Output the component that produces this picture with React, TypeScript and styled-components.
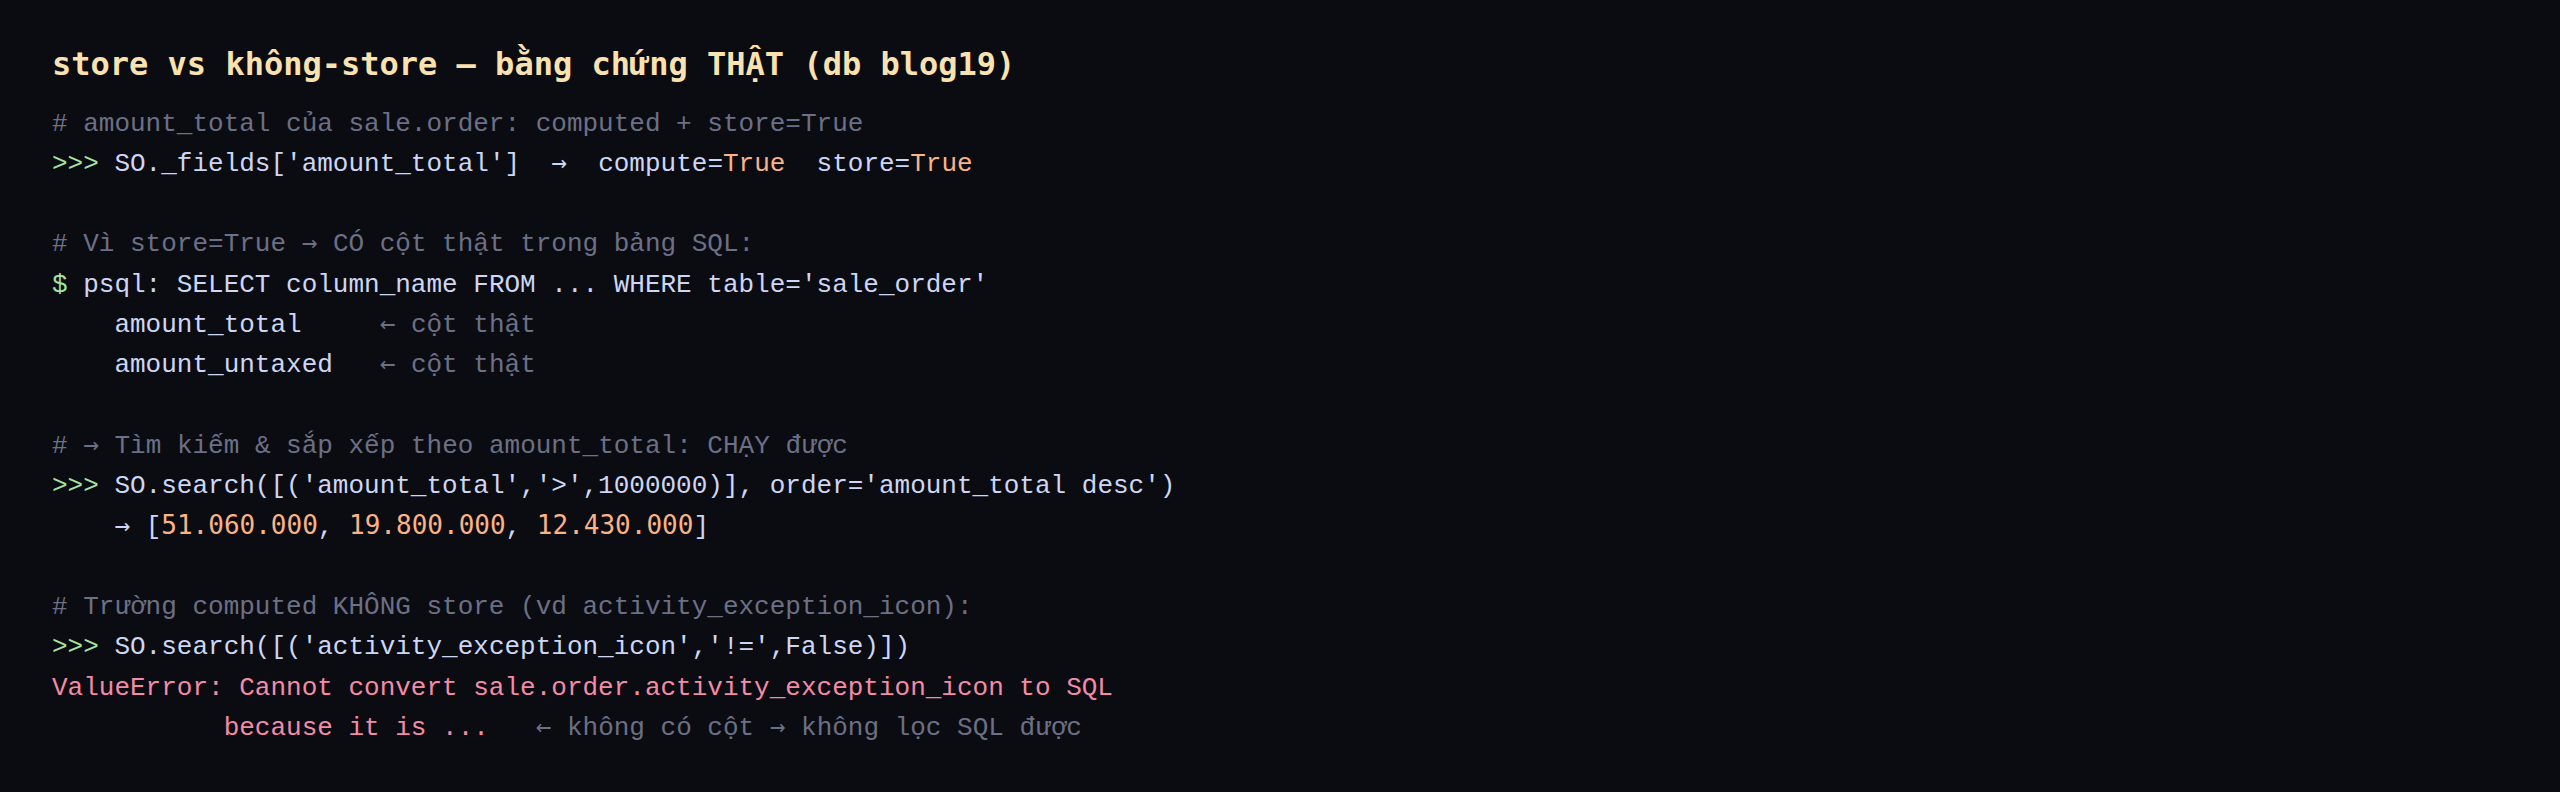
import React from "react";
import styled, { createGlobalStyle } from "styled-components";

const Global = createGlobalStyle`
  html, body { margin: 0; padding: 0; background: #0b0c11; }
  body { font-family: "Liberation Mono", monospace; }
`;

const Page = styled.main`
  min-height: 792px;
  box-sizing: border-box;
  background: #0b0c11;
  padding: 44px 52px 40px 52px;
`;

const Title = styled.h2`
  margin: 0 0 18px 0;
  font-family: "DejaVu Sans Mono", monospace;
  font-weight: 700;
  font-size: 32px;
  line-height: 1.3;
  color: #f9e2af;
`;

const Code = styled.div`
  font-family: "Liberation Mono", "Courier New", monospace;
  font-size: 26px;
  line-height: 1.55;
  color: #cdd6f4;
  white-space: pre;
`;

const Line = styled.div<{ $tone?: "comment" | "error" }>`
  height: 1.55em;
  color: ${(p) =>
    p.$tone === "comment" ? "#6c7086" : p.$tone === "error" ? "#f38ba8" : "#cdd6f4"};
`;

const Prompt = styled.span`
  color: #a6e3a1;
`;

const Bool = styled.span`
  color: #fab387;
`;

const Num = styled.span`
  color: #fab387;
  font-family: "DejaVu Sans Mono", monospace;
  line-height: 1;
`;

const Note = styled.span`
  color: #6c7086;
`;

const Arrow = styled.span`
  font-family: "DejaVu Sans Mono", monospace;
  line-height: 1;
`;

export default function App() {
  return (
    <>
      <Global />
      <Page>
        <Title>store vs không-store — bằng chứng THẬT (db blog19)</Title>
        <Code>
          <Line $tone="comment"># amount_total của sale.order: computed + store=True</Line>
          <Line>
            <Prompt>&gt;&gt;&gt;</Prompt> SO._fields['amount_total']  <Arrow>→</Arrow>  compute=<Bool>True</Bool>  store=<Bool>True</Bool>
          </Line>
          <Line />
          <Line $tone="comment"># Vì store=True <Arrow>→</Arrow> CÓ cột thật trong bảng SQL:</Line>
          <Line>
            <Prompt>$</Prompt> psql: SELECT column_name FROM ... WHERE table='sale_order'
          </Line>
          <Line>
            {"    amount_total     "}<Note><Arrow>←</Arrow> cột thật</Note>
          </Line>
          <Line>
            {"    amount_untaxed   "}<Note><Arrow>←</Arrow> cột thật</Note>
          </Line>
          <Line />
          <Line $tone="comment"># <Arrow>→</Arrow> Tìm kiếm &amp; sắp xếp theo amount_total: CHẠY được</Line>
          <Line>
            <Prompt>&gt;&gt;&gt;</Prompt> SO.search([('amount_total','&gt;',1000000)], order='amount_total desc')
          </Line>
          <Line>
            {"    "}<Arrow>→</Arrow>{" ["}<Num>51.060.000</Num>, <Num>19.800.000</Num>, <Num>12.430.000</Num>]
          </Line>
          <Line />
          <Line $tone="comment"># Trường computed KHÔNG store (vd activity_exception_icon):</Line>
          <Line>
            <Prompt>&gt;&gt;&gt;</Prompt> SO.search([('activity_exception_icon','!=',False)])
          </Line>
          <Line $tone="error">ValueError: Cannot convert sale.order.activity_exception_icon to SQL</Line>
          <Line $tone="error">
            {"           because it is ...   "}<Note><Arrow>←</Arrow> không có cột <Arrow>→</Arrow> không lọc SQL được</Note>
          </Line>
        </Code>
      </Page>
    </>
  );
}
